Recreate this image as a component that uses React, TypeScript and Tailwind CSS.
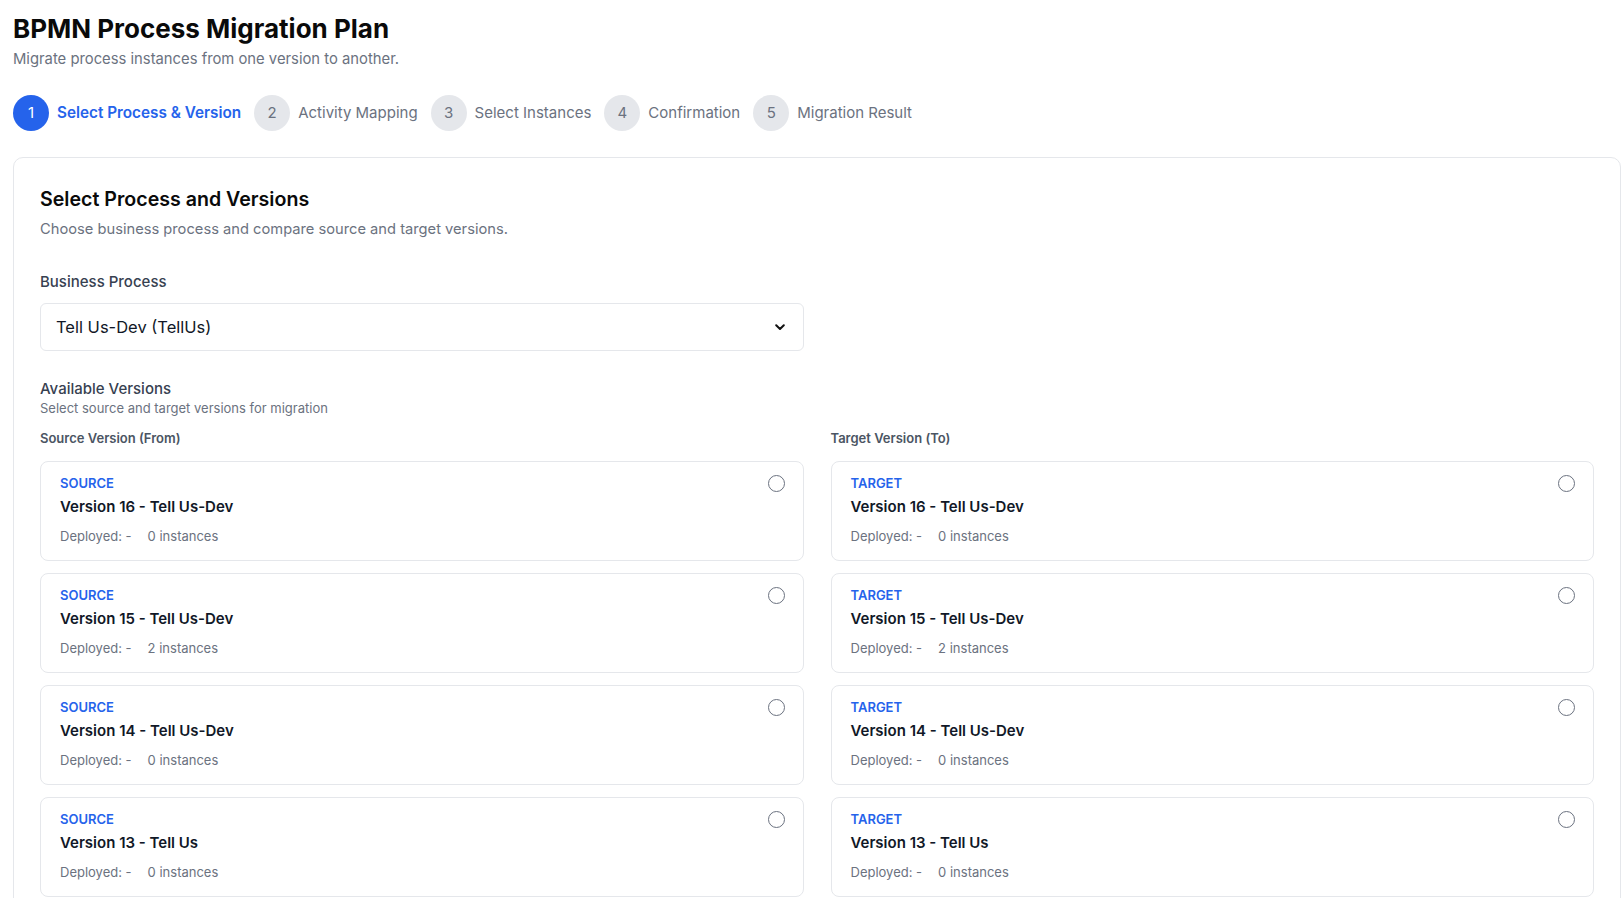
import React from 'react';

type Version = { num: number; name: string; instances: number };

const versions: Version[] = [
  { num: 16, name: 'Tell Us-Dev', instances: 0 },
  { num: 15, name: 'Tell Us-Dev', instances: 2 },
  { num: 14, name: 'Tell Us-Dev', instances: 0 },
  { num: 13, name: 'Tell Us', instances: 0 },
  { num: 12, name: 'Tell Us', instances: 0 },
];

const steps = ['Select Process & Version', 'Activity Mapping', 'Select Instances', 'Confirmation', 'Migration Result'];

const VersionCard: React.FC<{ v: Version; tag: string }> = ({ v, tag }) => (
  <div className="flex items-start justify-between rounded-lg border border-[#e5e7eb] bg-white pl-[19px] pr-[18px] pt-[13px] pb-[15px]">
    <div className="flex flex-col">
      <span className="text-[13px] leading-[16px] font-semibold text-[#2563eb]">{tag}</span>
      <span className="mt-[5px] text-[15px] leading-[22px] font-semibold text-[#111827]">
        Version {v.num} - {v.name}
      </span>
      <div className="mt-[9px] flex gap-4 text-[13px] leading-[18px] text-[#6b7280]">
        <span>Deployed: -</span>
        <span>{v.instances} instances</span>
      </div>
    </div>
    <span className="h-[17px] w-[17px] rounded-full border-[1.5px] border-[#6b7280] bg-white" />
  </div>
);

export default function App() {
  return (
    <div className="h-[898px] overflow-hidden bg-white pl-[13px] pr-[1px] pt-[13px] font-['Inter','Liberation_Sans',sans-serif] text-[#111827]">
      <h1 className="text-[26px] leading-[32px] font-bold text-[#0a0a0a]">BPMN Process Migration Plan</h1>
      <p className="mt-[4px] text-[14.8px] leading-[20px] text-[#6b7280]">Migrate process instances from one version to another.</p>

      {/* Stepper */}
      <div className="mt-[26px] flex items-center gap-[13px]">
        {steps.map((s, i) => (
          <div key={s} className="flex items-center gap-[8px]">
            <div
              className={`flex h-[36px] w-[36px] items-center justify-center rounded-full text-[15px] ${
                i === 0 ? 'bg-[#2563eb] text-white' : 'bg-[#e5e7eb] text-[#6b7280]'
              }`}
            >
              {i + 1}
            </div>
            <span className={`leading-[20px] ${i === 0 ? 'text-[15.3px] font-semibold text-[#2563eb]' : 'text-[15px] text-[#6b7280]'}`}>{s}</span>
          </div>
        ))}
      </div>

      {/* Main card */}
      <div className="mt-[26px] rounded-[10px] border border-[#e5e7eb] bg-white px-[26px] pt-[27px] pb-6">
        <h2 className="text-[19.6px] leading-[28px] font-semibold text-[#0a0a0a]">Select Process and Versions</h2>
        <p className="mt-[6px] text-[14.7px] leading-[20px] text-[#6b7280]">Choose business process and compare source and target versions.</p>

        <div className="grid grid-cols-2 gap-x-[27px]">
          <div>
            <label className="mt-[33px] block text-[15px] leading-[20px] font-medium text-[#374151]">Business Process</label>
            <div className="mt-[11px] flex h-[48px] items-center justify-between rounded-md border border-[#e5e7eb] bg-white pl-[15px] pr-[18px]">
              <span className="text-[16.5px] text-[#111827]">Tell Us-Dev (TellUs)</span>
              <svg width="10" height="7" viewBox="0 0 10 7" fill="none">
                <path d="M1.2 1.2 L5 5 L8.8 1.2" stroke="#111" strokeWidth="2" strokeLinecap="round" strokeLinejoin="round" />
              </svg>
            </div>
          </div>
        </div>

        <div className="mt-[28px]">
          <h3 className="text-[15px] leading-[20px] font-medium text-[#374151]">Available Versions</h3>
          <p className="text-[13px] leading-[18px] text-[#6b7280]">Select source and target versions for migration</p>
        </div>

        <div className="mt-[12px] grid grid-cols-2 gap-x-[27px]">
          <div>
            <h4 className="text-[13px] leading-[18px] font-semibold text-[#4b5563]">Source Version (From)</h4>
            <div className="mt-[14px] flex flex-col gap-[12px]">
              {versions.map((v) => (
                <VersionCard key={v.num} v={v} tag="SOURCE" />
              ))}
            </div>
          </div>
          <div>
            <h4 className="text-[13px] leading-[18px] font-semibold text-[#4b5563]">Target Version (To)</h4>
            <div className="mt-[14px] flex flex-col gap-[12px]">
              {versions.map((v) => (
                <VersionCard key={v.num} v={v} tag="TARGET" />
              ))}
            </div>
          </div>
        </div>
      </div>
    </div>
  );
}
